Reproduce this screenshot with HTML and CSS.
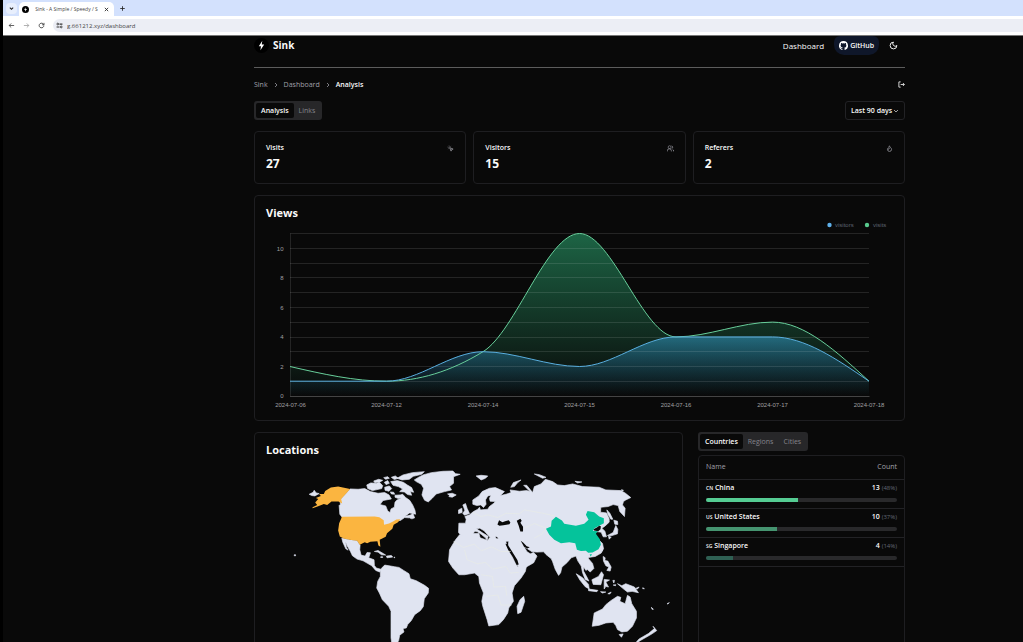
FILE: index.html
```html
<!DOCTYPE html>
<html lang="en">
<head>
<meta charset="utf-8">
<title>Sink - A Simple / Speedy / Secure Link Shortener</title>
<link rel="stylesheet" href="styles.css">
</head>
<body>
<div class="window">
  <div class="tabstrip">
    <button class="tab-search" aria-label="Search tabs"><svg class="ico-s" viewBox="0 0 24 24"><path d="M4 8l8 8 8-8" stroke-width="5"/></svg></button>
    <div class="browser-tab">
      <svg class="favicon" viewBox="0 0 24 24"><circle cx="12" cy="12" r="12" fill="#000"/><path d="M13 4 7 13h4l-1 7 7-10h-5z" fill="#fff"/></svg>
      <span class="tab-title">Sink - A Simple / Speedy / S</span>
      <button class="plain" aria-label="Close tab"><svg class="ico-s" viewBox="0 0 24 24"><path d="M4 4l16 16M20 4 4 20" stroke-width="4"/></svg></button>
    </div>
    <button class="plain new-tab" aria-label="New tab"><svg class="ico-s" viewBox="0 0 24 24"><path d="M12 1v22M1 12h22" stroke-width="4"/></svg></button>
  </div>
  <div class="toolbar">
    <button class="plain" aria-label="Back"><svg class="ico-m" viewBox="0 0 24 24"><path d="M21 12H4M11 5l-7 7 7 7" stroke-width="2.6"/></svg></button>
    <button class="plain dim" aria-label="Forward"><svg class="ico-m" viewBox="0 0 24 24"><path d="M3 12h17M13 5l7 7-7 7" stroke-width="2.6"/></svg></button>
    <button class="plain" aria-label="Reload"><svg class="ico-m" viewBox="0 0 24 24"><path d="M20 12a8 8 0 1 1-2.500-5.800L20 9M20.500 3v6.500H14" stroke-width="2.800"/></svg></button>
    <div class="address">
      <svg class="ico-m" viewBox="0 0 24 24"><path d="M12 7h10M2 17h10" stroke-width="4"/><circle cx="6" cy="7" r="3" stroke-width="3"/><circle cx="18" cy="17" r="3" stroke-width="3"/></svg>
      <input class="url" aria-label="Address" value="g.661212.xyz/dashboard">
    </div>
  </div>

  <div class="page">
    <div class="container">
      <header class="site-header">
        <a class="brand" href="#"><svg class="brand-icon" viewBox="0 0 28 28"><circle cx="14" cy="14" r="14" fill="#000"/><path d="M15.500 5 9 15.500h4L12 23l7-11h-4.500z" fill="#fff"/></svg><span>Sink</span></a>
        <nav class="site-nav">
          <a class="nav-link" href="#">Dashboard</a>
          <a class="github" href="#"><svg class="gh-icon" viewBox="0 0 24 24"><path fill="#fff" d="M12 .3a12 12 0 0 0-3.800 23.400c.6.1.8-.3.8-.6v-2c-3.300.7-4-1.600-4-1.600-.6-1.400-1.400-1.800-1.400-1.800-1-.7.100-.7.100-.7 1.200 0 1.900 1.200 1.900 1.200 1 1.800 2.800 1.300 3.500 1 0-.8.4-1.300.7-1.600-2.700-.3-5.500-1.300-5.500-6 0-1.200.5-2.300 1.300-3.100-.2-.4-.6-1.600 0-3.200 0 0 1-.3 3.400 1.200a11.500 11.500 0 0 1 6 0c2.300-1.500 3.300-1.200 3.300-1.200.6 1.600.2 2.800 0 3.200.9.800 1.300 1.900 1.300 3.200 0 4.600-2.800 5.600-5.500 5.900.5.400.9 1 .9 2.200v3.300c0 .3.1.7.800.6A12 12 0 0 0 12 .3"/></svg>GitHub</a>
          <button class="plain light" aria-label="Toggle theme"><svg class="ico-l" viewBox="0 0 24 24"><path d="M12 3a6 6 0 0 0 9 9 9 9 0 1 1-9-9Z" stroke-width="2.500"/></svg></button>
        </nav>
      </header>

      <div class="crumb-row">
        <nav class="crumbs" aria-label="Breadcrumb">
          <a href="#">Sink</a>
          <svg class="ico-c" viewBox="0 0 24 24"><path d="M8 4l8 8-8 8" stroke-width="3"/></svg>
          <a href="#">Dashboard</a>
          <svg class="ico-c" viewBox="0 0 24 24"><path d="M8 4l8 8-8 8" stroke-width="3"/></svg>
          <span class="current">Analysis</span>
        </nav>
        <button class="plain light" aria-label="Log out"><svg class="ico-m" viewBox="0 0 24 24"><path d="M9 3H3v18h6M17 7l5 5-5 5M21 12H9" stroke-width="2.800"/></svg></button>
      </div>

      <div class="filter-row">
        <div class="tabs">
          <button class="tab active">Analysis</button>
          <button class="tab">Links</button>
        </div>
        <label class="range">
          <select aria-label="Date range"><option>Last 90 days</option></select>
          <svg class="ico-c" viewBox="0 0 24 24"><path d="M4 8l8 8 8-8" stroke-width="2.500"/></svg>
        </label>
      </div>

      <section class="stats">
        <article class="card stat">
          <div class="stat-head"><h3>Visits</h3><svg class="ico-m" viewBox="0 0 24 24"><path d="M9 9l5 12 1.800-5.200L21 14ZM7.200 2.200 8 5.100M5.100 8l-2.900-.8M14 4.100 12 6M6 12l-1.900 2" stroke-width="2.500"/></svg></div>
          <div class="stat-value">27</div>
        </article>
        <article class="card stat">
          <div class="stat-head"><h3>Visitors</h3><svg class="ico-m" viewBox="0 0 24 24"><circle cx="9" cy="7.500" r="5"/><path d="M1 22v-2a7 7 0 0 1 14 0v2M16 3a5 5 0 0 1 1 9M19 14.500c2.500 1.500 4 3.500 4 7.500" stroke-width="2.500"/></svg></div>
          <div class="stat-value">15</div>
        </article>
        <article class="card stat">
          <div class="stat-head"><h3>Referers</h3><svg class="ico-m" viewBox="0 0 24 24"><path d="M8.500 14.500A2.500 2.500 0 0 0 11 12c0-1.400-.5-2-1-3-1.100-2.100-.2-4.100 2-6 .5 2.500 2 4.900 4 6.500s3 3.500 3 5.500a7 7 0 1 1-14 0c0-1.200.4-2.300 1-3a2.500 2.500 0 0 0 2.500 2.500z" stroke-width="2.500"/></svg></div>
          <div class="stat-value">2</div>
        </article>
      </section>

      <section class="card views">
        <h2>Views</h2>
        <svg class="chart" viewBox="255 220 649 193" role="img" aria-label="Views chart">
          <defs>
            <linearGradient id="gv" x1="0" y1="0" x2="0" y2="1"><stop offset="0" stop-color="#2fb87c" stop-opacity=".52"/><stop offset="1" stop-color="#2fb87c" stop-opacity="0"/></linearGradient>
            <linearGradient id="gb" x1="0" y1="0" x2="0" y2="1"><stop offset="0" stop-color="#329bc6" stop-opacity=".56"/><stop offset="1" stop-color="#1c6ca0" stop-opacity="0"/></linearGradient>
          </defs>
          <circle cx="829.500" cy="225" r="2.200" fill="#5fb0ea"/><text class="legend" x="835" y="227">visitors</text>
          <circle cx="867" cy="225" r="2.200" fill="#59ca8e"/><text class="legend" x="873" y="227">visits</text>
          <path class="area" fill="url(#gv)" d="M290 366.500C322.200 373.900 354.300 381.200 386.500 381.200S450.800 371.400 483 351.700 547.300 233.500 579.500 233.500 643.800 336.900 676 336.900 740.300 322.100 772.500 322.100 836.800 351.700 869 381.200V396H290Z"/>
          <path class="area" fill="url(#gb)" d="M290 381.200H386.500C418.700 381.200 450.800 351.700 483 351.700S547.300 366.500 579.500 366.500 643.800 336.900 676 336.900H772.500C804.700 336.900 836.800 359.100 869 381.200V396H290Z"/>
          <path class="grid" d="M290.500 233.500V396M290 233.500H869M290 248.500H869M290 263.500H869M290 277.500H869M290 292.500H869M290 307.500H869M290 322.500H869M290 337.500H869M290 351.500H869M290 366.500H869M290 381.500H869"/>
          <path class="axis" d="M290 396.500H869.500"/>
          <path class="line-g" d="M290 366.500C322.200 373.900 354.300 381.200 386.500 381.200C418.700 381.200 450.800 371.400 483 351.700C515.200 332 547.300 233.500 579.500 233.500S643.800 336.900 676 336.900 740.300 322.100 772.500 322.100 836.800 351.700 869 381.200"/>
          <path class="line-b" d="M290 381.200H386.500C418.700 381.200 450.800 351.700 483 351.700S547.300 366.500 579.500 366.500 643.800 336.900 676 336.900H772.500C804.700 336.900 836.800 359.100 869 381.200"/>
          <g class="tick end"><text x="283.500" y="250.500">10</text><text x="283.500" y="280">8</text><text x="283.500" y="309.500">6</text><text x="283.500" y="339">4</text><text x="283.500" y="368.500">2</text><text x="283.500" y="398">0</text></g>
          <g class="tick mid"><text x="290.500" y="407">2024-07-06</text><text x="386.500" y="407">2024-07-12</text><text x="483" y="407">2024-07-14</text><text x="579.500" y="407">2024-07-15</text><text x="676" y="407">2024-07-16</text><text x="772.500" y="407">2024-07-17</text><text x="869" y="407">2024-07-18</text></g>
        </svg>
      </section>

      <section class="bottom">
        <article class="card locations">
          <h2>Locations</h2>
          <svg class="map" viewBox="15 111 1284 700" role="img" aria-label="World map">
            <g class="land">
              <path d="M178 208l12-6 3-6 6 8 9 2-13 7-9-1z"/>
              <path d="M301 192l24 1 20-2 17 9 23 5 20-2 13 7 7 12-25 5-9 12 17 4 6 15 7 5 3-11 10-5 2-15 5-6 12-6-4-9 10-3 9 10 12 8 9 14 7 16 2 12-18-4-14 10 16-3-4 8-13-1-13 9-8 0-14 8-14 4-12 6-4-2-1-14-13-9-13-3h-96l-7-9-2-26 4-4-2-13z"/>
              <path d="M351 180l12-6 18 1 8-3 10 10-3 9-14 3-14 3-14-6zM372 168l15-5 12 3-8 5-16 2zM404 172l10-5 5 8-10 4zM405 187l14-4 7 8-8 8-12-3zM425 157l12-4 9 7-12 4zM423 170l20-3 18 5 12 8 13 8 6 14-10-2 4 11-12-2-10-8-14-1 9-8-13-7-16-4zM422 201l10 1 3 6-10-1zM436 211l14-1 6 8-10 3-10-4zM442 160l18-10 28-7 36-3-8 8-25 6-12 9-22 2zM402 158l12-3 5 5-11 3z"/>
              <path d="M494 165l11-7 15-8 25-7 35-4 30-1 8 8 14 2-20 7v20l-12 10 6 10-21 5-25 7-12 13-12 11-11-5-8-16 5-20-7-12-15-8z"/>
              <path d="M594 207l14-2 12 5-12 7-10-2 2-4zM480 272l10-6 5 13-8 3-8-3z"/>
              <path d="M276 340l24 5 22 3 9 13-1 14 4 16 12 3 6-11 10 1-5 15 16 6 1 17 6 8 16 4-6 8-12-5-12-14-14-8-12-7-18-5-14-10-6-13-10-17-5-13 3 18 5 8-7-4-9-20z"/>
              <path d="M374 380l11-3 17 10 6 4-13-1-10-8zM410 394l15-2 4 5-17 2zM393 396l6 0 0 2-6 0zM433 397h2v2h-2zM133 390h4v3h-4z"/>
              <path d="M396 430l9-9 13 2 17 3 13 2 14 9 16 10 4 15 18 6 25 14 12 9-1 14-12 17-3 24-9 12-17 12-10 18-11 12-4 10-10 2 3 10-13 10-3 16-7 12 6 30-16-10-6-40v-80l-7-15-19-20-9-20-8-15 3-20 8-15v-15z"/>
            </g>
            <g class="land" transform="translate(570 105)">
              <path d="M57 218l1-28h20l2-12-4-8 14-5 12-10 13-7 5-6 3 8 22-2 5-8 13-10 5-5-16-1-2-9 5-9-10 2-7 12 2 13-8 10-8-8-12 2-12-4v-13l18-12 10-13 22-10 18-2 27 12-12 12 17-4 15-5-3-8 28 4 22-2 10 3-19-19 9 0 18 22 5-18 20-8 13-14 22 7 15 10 20 2 25-5 30 8 50 2 20 8 45 2 14 8 16 13-15 7-7 5-3 10 8 10-2 25-14-15-5-18-15-3-15 6-22 2-1 15 18 2 8 18v10l-13 12-9 6 9 9 5 17-10 0-6-14-9-1-14-2 10 20 17 17 3 16-7 13-18 10-20 3v4l12 14 4 15-11 11-9-8-4 3-7-11v13l10 18 6 12-11-5-8-20-4-20-10-15-6-15-14 5-13 15-15 13-4 17-6 8-10-18-8-23-4-9-16-13-7-8-20 1-15-1-15-10-10-7 10 17 10 6 10-4 10 11-10 20-30 17-10 6-10-18-15-25-12-25 2-20-28 1-5-13-7-3 1 14-10 7-7-17-18-20-13-8-10 2 18 12 17 10-3 12-5-7-12-10-13-9-7-1-7 10-10 10-13 7z"/>
              <path d="M60 225l15 3 20-6 23-2 4 14 23 8 5-8 25 3 23 3 4 18 13 27 13 25 7 12 27-6-4 19-13 20-20 23-7 22 4 25-14 20-3 15-13 20-14 15-30 4-5-19-13-40-3-15 5-25-12-30-2-20-13-10-30 5H58l-18-20-13-20 3-35 18-30z"/>
              <path d="M70 135l8-4 5 15 7 15-15 5-5-5 6-10zM57 150l10-5 1 13-11 3zM233 440l9-20 11-10 3 15-11 33-10 4zM110 48l15-2 20 2-7 7-13 5zM214 82l8-14 23-8-10 8-10 12zM285 42l15 2 20 8-10 3zM407 64l21 2-13 3zM546 90l6 0 0 3z"/>
              <path d="M503 150l9 10 9 18-6 0-9-15zM524 181l11 3 1 10-9-1zM530 197l6 12-1 13-19 6-11-1 17-9zM508 229l8 3-6 6zM486 265l5-1-2 10zM492 290l6 4-1 8 9 2 10 18-3 12-10-2 6-10-9-4-7-14zM358 328l6 6-4 6zM411 342l19 12 18 20 2 14-12-7-16-20zM448 388l28 4-3 4-25-3zM458 360l20-10 9-14 6 9-8 30-23-1zM495 359l16 2-11 6 8 15-8-2-5 8zM484 396l16 1-10 3zM506 402l10-5-4 6zM521 362l5 0-2 8zM522 376l8-1-1 3zM535 372l13 6 12-6 26 10 12 17-19-4-14 2-14-11zM590 386l10-4-5 6zM611 384l5 3-5 0z"/>
              <path d="M459 500l3-20 3-20 25-12 10-13 15-12 20-13 10 3-3 12 16 7 7-25 8 5 5 20 14 23v20l-12 25-15 15-17 2-13-7-5-12-8-10-22 2-20 7zM540 525l12-2-5 10zM642 500l11 13-13 9-10 6-30 17-16 20-6-2 22-25 28-16 18-15zM637 443l6 6-4 0zM684 432l7-3-5 4z"/>
            </g>
            <g class="sea" transform="translate(570 105)"><path d="M174 194l5-13 10 6 8-3 11-3 5 7-3 5-18 3-12 2zM232 183l11-6 4 6-4 6 8 12v14l-8 0-5-17zM198 252l6 1 14 22 16 26 4 13-6 2-12-24-14-22zM244 243l8 6 10 10 9 3-7 4-10-5z"/></g>
            <path class="border" transform="translate(570 105)" d="M42 245l30 18 32-10 22 20 30-12 28 14h30M75 270l8 30 30 12 25-4 22 20 40-8 12 20 26-2M125 345l34 5 4 32 35-2 4 28M140 410l35-4 10 30 32 0M100 158l25 12 20-5 30 8 25-13 40 2 15-12 55 10 35 8M255 205l30-14 35 14M285 235l22-12 12-15"/>
            <path class="us" d="M196 233l9-11-7-3 15-6-5-6 14 0 4-9 17-10 22-3 36 7-27 30 3 14-11-6-21 0-13 10-10-3-17 7-17 6 0-3 14-7zM276 276l99-1 14 2 13 9 1 14 15-4 12-6 10-6 12-1-7 9-13 8-4 12-16 13-4 11-18 9 2 21-6-4-3-13-21 2-10 4-7-3-15 8-8-12-22-3-18-4-12-6-5-18 3-22 6-13z"/>
            <path class="cn" transform="translate(570 105)" d="M320 207l15-7 2-17 13-12 18 11 7 10 35 6 25-6 13-12-8-15 5-12 20 4 15 13 14 5v15l-14 8-14 7-5 8 15 1-6 8 12 16 3 17-7 13-18 10-13 1-7-6-15 1-12-4-5-20-18-3-25 3-20-10-15-15zM451 284l7-1-3 7z"/>
            <path class="sea" transform="translate(570 105)" d="M463 208l10-5 7-5 5 1-1 9-7 6-12-2z"/>
          </svg>
        </article>

        <aside class="breakdown">
          <div class="tabs">
            <button class="tab active">Countries</button>
            <button class="tab">Regions</button>
            <button class="tab">Cities</button>
          </div>
          <div class="card list">
            <table>
              <thead><tr><th scope="col">Name</th><th scope="col" class="num">Count</th></tr></thead>
              <tbody><tr><td><small>CN</small> China</td><td class="num">13 <span class="pct">(48%)</span></td></tr>
              <tr class="bar-row"><td colspan="2"><div class="bar"><div class="fill f1" style="width:48%"></div></div></td></tr></tbody>
              <tbody><tr><td><small>US</small> United States</td><td class="num">10 <span class="pct">(37%)</span></td></tr>
              <tr class="bar-row"><td colspan="2"><div class="bar"><div class="fill f2" style="width:37%"></div></div></td></tr></tbody>
              <tbody><tr><td><small>SG</small> Singapore</td><td class="num">4 <span class="pct">(14%)</span></td></tr>
              <tr class="bar-row"><td colspan="2"><div class="bar"><div class="fill f3" style="width:14%"></div></div></td></tr></tbody>
            </table>
          </div>
        </aside>
      </section>
    </div>
  </div>
</div>
</body>
</html>
```

FILE: styles.css
```css
* { box-sizing: border-box; }
body { margin: 0; background: #000; font-family: "Open Sans", "Noto Sans", sans-serif; font-size: 7px; line-height: 10px; color: #fafafa; }
h2, h3 { margin: 0; }
a { color: inherit; text-decoration: none; }
button, select, input { font: inherit; color: inherit; }
svg { display: block; fill: none; stroke: currentColor; stroke-width: 2; flex: none; }
svg [fill] { stroke: none; }
.ico-s { width: 5px; height: 5px; }
.ico-c { width: 6px; height: 6px; }
.ico-m { width: 7px; height: 7px; }
.ico-l { width: 9px; height: 9px; }
.plain { border: 0; background: none; padding: 0; }

.window { height: 100vh; overflow: hidden; display: flex; flex-direction: column; padding-left: 3px; }
.tabstrip { flex: none; height: 16px; background: #d3e1fd; display: flex; align-items: flex-end; color: #222; padding-left: 3px; }
.tab-search { border: 0; padding: 0; width: 11px; height: 11px; margin-bottom: 2px; border-radius: 4px; background: #e8effd; display: grid; place-items: center; }
.browser-tab { display: flex; align-items: center; justify-content: space-between; width: 95px; height: 14px; margin-left: 2px; padding: 0 5px 0 3px; background: #fff; border-radius: 5px 5px 0 0; }
.favicon { width: 7px; height: 7px; }
.tab-title { white-space: nowrap; font-size: 5px; color: #444; }
.new-tab { margin: 0 0 5px 6px; }
.toolbar { flex: none; height: 20px; background: #fff; display: flex; align-items: center; gap: 8px; padding-left: 5px; color: #333; border-bottom: 1px solid #777; }
.dim { color: #999; }
.address { flex: 1; display: flex; align-items: center; gap: 4px; height: 13px; padding-left: 3px; border-radius: 7px 0 0 7px; background: #eceef5; }
.url { flex: 1; border: 0; padding: 0; background: none; font-size: 6px; color: #444; }

.page { flex: 1; min-height: 0; overflow: hidden; background: #090909; display: grid; grid-template-columns: 251fr 651fr 118fr; }
.container { grid-column: 2; min-width: 0; }
.site-header { display: flex; justify-content: space-between; align-items: flex-start; height: 32px; border-bottom: 1px solid #5c5c5c; }
.brand { display: flex; align-items: center; gap: 4px; height: 18px; font-size: 10px; font-weight: 700; }
.brand-icon { width: 15px; height: 15px; }
.site-nav { display: flex; align-items: center; gap: 10px; padding-right: 7px; }
.nav-link { font-size: 8px; }
.github { display: flex; align-items: center; gap: 2px; height: 19px; padding: 0 5px; border-radius: 6px 6px 10px 10px; background: #0f172a; font-weight: 600; }
.gh-icon { width: 9px; height: 9px; }
.light { color: #fafafa; }

.crumb-row { display: flex; justify-content: space-between; align-items: center; height: 33px; }
.crumbs { display: flex; align-items: center; gap: 5px; color: #a1a1aa; }
.current { color: #fafafa; font-weight: 600; }
.filter-row { display: flex; justify-content: space-between; }
.tabs { display: inline-flex; height: 19px; padding: 2px; border-radius: 3px; background: #272729; }
.tab { border: 0; padding: 0 5px; border-radius: 2px; background: none; color: #85858c; font-weight: 500; }
.tab.active { background: #090909; color: #fafafa; font-weight: 600; }
.range { display: flex; align-items: center; height: 19px; padding: 0 5px; border: 1px solid #222225; border-radius: 3px; font-weight: 600; }
.range select { appearance: none; border: 0; padding: 0; background: none; }

.card { border: 1px solid #1e1e21; border-radius: 4px; background: #090909; }
.stats { display: grid; grid-template-columns: repeat(3, 1fr); gap: 7px; margin-top: 11px; }
.stat { height: 53px; padding: 11px; }
.stat-head { display: flex; justify-content: space-between; align-items: center; color: #a1a1aa; }
.stat h3 { font-size: 7px; font-weight: 600; color: #fafafa; }
.stat-value { font-size: 12px; line-height: 16px; margin-top: 3px; font-weight: 700; }
h2 { padding: 10px 11px 0; font-size: 11px; line-height: 14px; font-weight: 700; }
.views { margin-top: 11px; padding-bottom: 7px; }
.chart { width: 100%; overflow: visible; font-family: "Liberation Sans", Arial, sans-serif; font-size: 6px; }
.chart text { stroke: none; fill: #a0a0a3; }
.chart .legend { fill: #5d6370; }
.chart .end { text-anchor: end; }
.chart .mid { text-anchor: middle; }
.grid { stroke: #fff; stroke-opacity: .11; stroke-width: 1; }
.axis { stroke: #444; stroke-width: 1; }
.line-g { stroke: #68cf9b; stroke-width: 1; }
.line-b { stroke: #59afe0; stroke-width: 1; }

.bottom { display: grid; grid-template-columns: 429fr 207fr; gap: 15px; margin-top: 11px; }
.map { width: 100%; margin-top: 5px; }
.land { fill: #e0e4f1; stroke: #e0e4f1; stroke-linejoin: round; }
.sea { fill: #090909; stroke: none; }
.border { stroke: #e9ebe6; }
.us { fill: #fbb540; stroke: none; }
.cn { fill: #05c39b; stroke: none; }
.breakdown { display: flex; flex-direction: column; align-items: flex-start; gap: 4px; }
.list { width: 100%; flex: 1; }
table { width: 100%; border-collapse: collapse; }
th { height: 23px; padding: 0 7px; text-align: left; font-weight: 500; color: #a1a1aa; border-bottom: 1px solid #222225; }
td { height: 18px; padding: 0 7px; font-weight: 600; vertical-align: middle; }
.num { text-align: right; }
small { font-size: 5px; }
.pct { font-size: 6px; font-weight: 400; color: #626874; }
.bar-row td { height: 11px; padding-bottom: 5px; border-bottom: 1px solid #222225; }
.bar { height: 4px; border-radius: 2px; background: #29292b; overflow: hidden; }
.fill { height: 100%; }
.f1 { background: #55cc93; }
.f2 { background: #459470; }
.f3 { background: #2f6053; }
```
